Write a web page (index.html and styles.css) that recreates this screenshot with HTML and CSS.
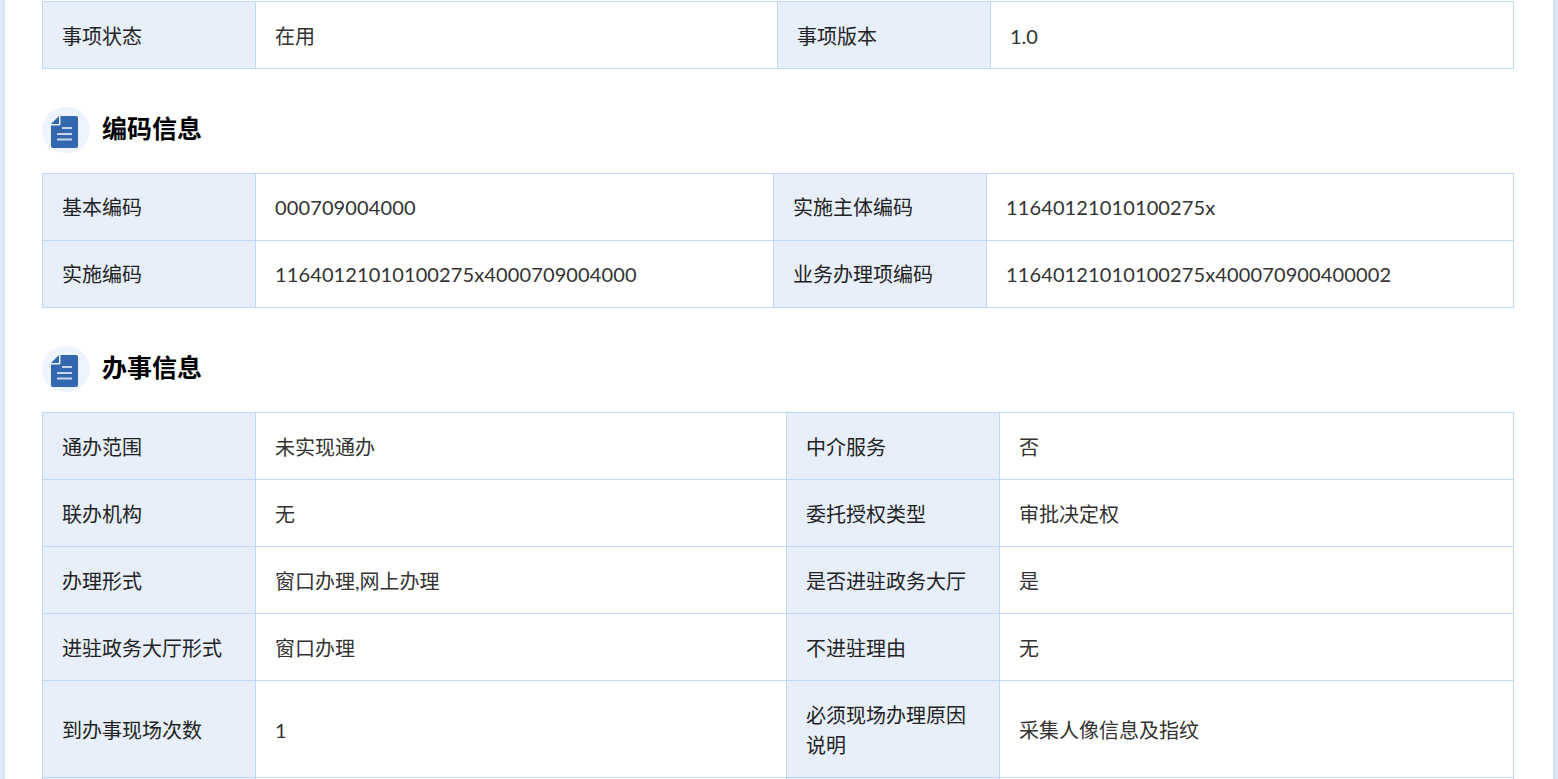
FILE: index.html
```html
<!DOCTYPE html>
<html lang="zh-CN">
<head>
<meta charset="utf-8">
<title>办事信息</title>
<link rel="stylesheet" href="styles.css">
</head>
<body>
<main class="page">
  <table class="info info-a">
    <colgroup><col class="c-label"><col class="c-value-a"><col class="c-label"><col></colgroup>
    <tr><th>事项状态</th><td>在用</td><th>事项版本</th><td>1.0</td></tr>
  </table>
  <h2 class="section-title">
    <span class="badge"><svg class="doc" viewBox="0 0 27 32"><path fill="#3368b0" d="M9.500 0H25a2 2 0 0 1 2 2V30a2 2 0 0 1-2 2H2a2 2 0 0 1-2-2V9.500H8a1.500 1.500 0 0 0 1.500-1.500z"/><path fill="#3368b0" d="M8 0V8H0z"/><path fill="#c5d5ea" d="M11 11H21V13H11zM6 17H21V19H6zM6 22.500H21V24.500H6z"/></svg></span>
    <span class="title-text">编码信息</span>
  </h2>
  <table class="info info-b">
    <colgroup><col class="c-label"><col class="c-value-b"><col class="c-label"><col></colgroup>
    <tr><th>基本编码</th><td class="num">000709004000</td><th>实施主体编码</th><td class="num">11640121010100275x</td></tr>
    <tr><th>实施编码</th><td class="num">11640121010100275x4000709004000</td><th>业务办理项编码</th><td class="num">11640121010100275x400070900400002</td></tr>
  </table>
  <h2 class="section-title">
    <span class="badge"><svg class="doc" viewBox="0 0 27 32"><path fill="#3368b0" d="M9.500 0H25a2 2 0 0 1 2 2V30a2 2 0 0 1-2 2H2a2 2 0 0 1-2-2V9.500H8a1.500 1.500 0 0 0 1.500-1.500z"/><path fill="#3368b0" d="M8 0V8H0z"/><path fill="#c5d5ea" d="M11 11H21V13H11zM6 17H21V19H6zM6 22.500H21V24.500H6z"/></svg></span>
    <span class="title-text">办事信息</span>
  </h2>
  <table class="info info-c">
    <colgroup><col class="c-label"><col class="c-value-c"><col class="c-label"><col></colgroup>
    <tr><th>通办范围</th><td>未实现通办</td><th>中介服务</th><td>否</td></tr>
    <tr><th>联办机构</th><td>无</td><th>委托授权类型</th><td>审批决定权</td></tr>
    <tr><th>办理形式</th><td>窗口办理,网上办理</td><th>是否进驻政务大厅</th><td>是</td></tr>
    <tr><th>进驻政务大厅形式</th><td>窗口办理</td><th>不进驻理由</th><td>无</td></tr>
    <tr class="tall"><th>到办事现场次数</th><td>1</td><th>必须现场办理原因说明</th><td>采集人像信息及指纹</td></tr>
    <tr><th></th><td></td><th></th><td></td></tr>
  </table>
</main>
</body>
</html>
```
FILE: styles.css
```css
html, body {
  margin: 0;
  height: 779px;
  overflow: hidden;
  background: #fff;
}
.page {
  box-sizing: border-box;
  height: 779px;
  padding: 1px 44px 0 42px;
  font-family: "Lato", "Noto Sans CJK SC", sans-serif;
  font-size: 20px;
  color: #333;
  background:
    linear-gradient(to right, #e2ecfa, #cfe0f6) left top / 5px 100% no-repeat,
    linear-gradient(to right, #cfe0f6, #e2ecfa) right top / 5px 100% no-repeat,
    #fff;
}
.info {
  width: 100%;
  table-layout: fixed;
  border-collapse: collapse;
}
.info th, .info td {
  box-sizing: border-box;
  height: 67px;
  border: 1px solid #bfd8f5;
  padding: 0 19px;
  font-weight: 400;
  line-height: 30px;
  text-align: left;
}
.info-a th, .info-a td,
.info-c th, .info-c td {
  padding-top: 2px;
}
.info th {
  background: #e7effa;
  color: #222;
}
.info .num { letter-spacing: 0.12px; }
.info .tall th, .info .tall td { height: 97px; }
.c-label { width: 213px; }
.c-value-a { width: 522px; }
.c-value-b { width: 518px; }
.c-value-c { width: 531px; }
.section-title {
  display: flex;
  align-items: flex-start;
  gap: 12px;
  margin: 38px 0 20px;
  height: 46px;
  font-size: 25px;
  font-weight: 700;
  color: #000;
}
.title-text { line-height: 42px; }
.badge {
  box-sizing: border-box;
  display: flex;
  align-items: flex-start;
  width: 48px;
  height: 46px;
  padding: 9px 0 0 9px;
  border-radius: 50%;
  background: #edf4fd;
}
.doc { width: 27px; height: 32px; }
```
